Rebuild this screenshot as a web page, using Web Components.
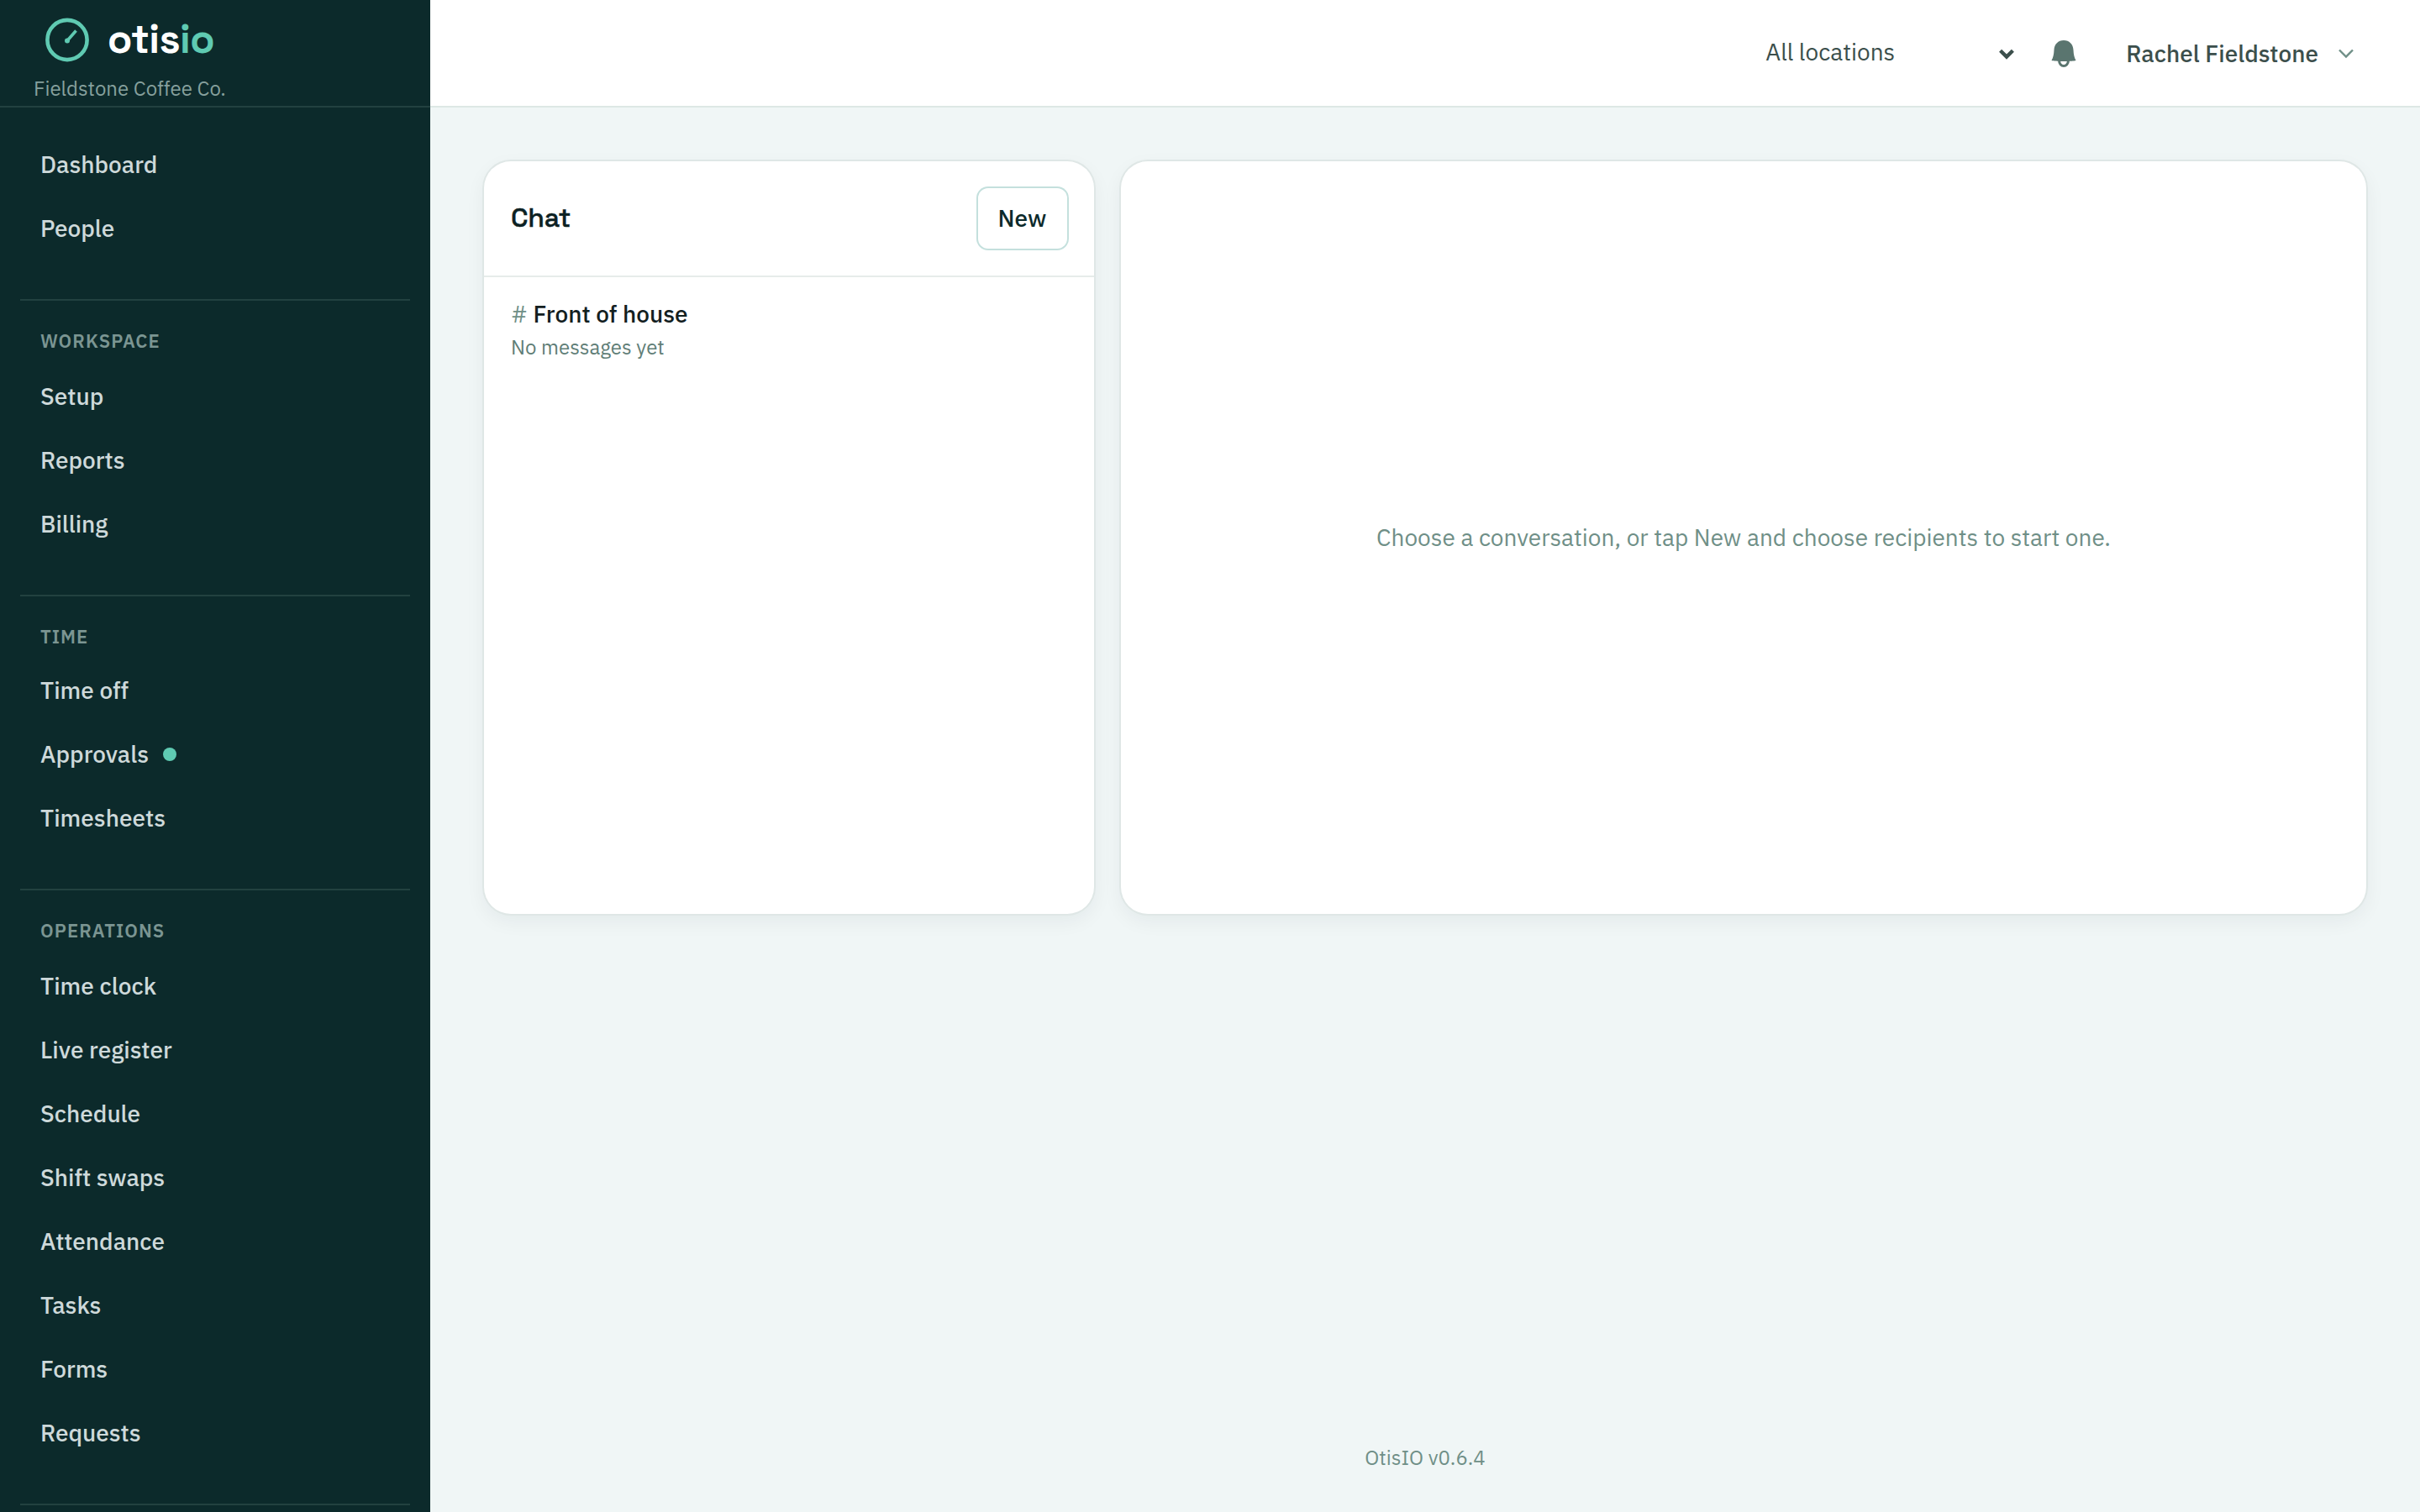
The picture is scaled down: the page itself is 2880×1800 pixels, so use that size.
<!DOCTYPE html>
<html lang="en">
<head>
<meta charset="utf-8">
<title>OtisIO</title>
<style>
  body {
    margin: 0;
    width: 2880px;
    height: 1800px;
    overflow: hidden;
    font: 400 28px/36px "IBM Plex Sans", Roboto, sans-serif;
    --ink: #0c2123;
    --muted: #6f8f87;
    --mint: #5fcab2;
    --line: #dde8e5;
  }
</style>
</head>
<body>
<otis-app>
  <otis-sidebar slot="sidebar" company="Fieldstone Coffee Co.">
    <nav-section>
      <nav-item>Dashboard</nav-item>
      <nav-item>People</nav-item>
    </nav-section>
    <nav-section label="Workspace">
      <nav-item>Setup</nav-item>
      <nav-item>Reports</nav-item>
      <nav-item>Billing</nav-item>
    </nav-section>
    <nav-section label="Time" style="--label-gap: 4px">
      <nav-item>Time off</nav-item>
      <nav-item dot>Approvals</nav-item>
      <nav-item>Timesheets</nav-item>
    </nav-section>
    <nav-section label="Operations">
      <nav-item>Time clock</nav-item>
      <nav-item>Live register</nav-item>
      <nav-item>Schedule</nav-item>
      <nav-item>Shift swaps</nav-item>
      <nav-item>Attendance</nav-item>
      <nav-item>Tasks</nav-item>
      <nav-item>Forms</nav-item>
      <nav-item>Requests</nav-item>
    </nav-section>
    <nav-section></nav-section>
  </otis-sidebar>
  <otis-topbar slot="topbar" location="All locations" user="Rachel Fieldstone"></otis-topbar>
  <otis-card>
    <chat-header slot="header" heading="Chat"><otis-button>New</otis-button></chat-header>
    <chat-row name="Front of house">No messages yet</chat-row>
  </otis-card>
  <otis-card>
    <empty-state>Choose a conversation, or tap New and choose recipients to start one.</empty-state>
  </otis-card>
  <span slot="footer">OtisIO v0.6.4</span>
</otis-app>

<script>
class BaseElement extends HTMLElement {
  constructor() {
    super();
    this.attachShadow({ mode: "open" });
    this.shadowRoot.innerHTML = this.render();
  }
  attr(name) {
    return this.getAttribute(name) || "";
  }
}

customElements.define("otis-app", class extends BaseElement {
  render() {
    return `
      <style>
        :host {
          display: grid;
          grid-template: 128px 1fr / 512px 1fr;
          width: 2880px;
          height: 1800px;
          background: #f0f6f6;
        }
        ::slotted([slot="sidebar"]) { grid-row: 1 / 3; }
        .content {
          display: flex;
          flex-direction: column;
          justify-content: space-between;
          padding: 64px 64px 47px;
        }
        main {
          display: grid;
          grid-template-columns: 726px 1fr;
          gap: 32px;
          height: 896px;
        }
        footer {
          font-size: 24px;
          line-height: 36px;
          text-align: center;
          color: var(--muted);
        }
      </style>
      <slot name="sidebar"></slot>
      <slot name="topbar"></slot>
      <div class="content">
        <main><slot></slot></main>
        <footer><slot name="footer"></slot></footer>
      </div>`;
  }
});

customElements.define("otis-sidebar", class extends BaseElement {
  render() {
    return `
      <style>
        :host {
          display: block;
          overflow: hidden;
          background: #0c2a2b;
        }
        header {
          box-sizing: border-box;
          height: 128px;
          padding: 16px 40px 0;
          border-bottom: 2px solid #224140;
        }
        .brand {
          display: flex;
          align-items: center;
          gap: 16px;
          height: 64px;
          padding-left: 8px;
          font: 600 48px/64px "Space Grotesk", Inter, sans-serif;
          letter-spacing: -0.6px;
          color: #fff;
        }
        .brand span { margin-top: -2px; }
        .brand em { font-style: normal; color: var(--mint); }
        p {
          margin: 7px 0 0;
          font-size: 24px;
          line-height: 36px;
          color: #86a09d;
        }
        nav { padding: 32px 24px 0; }
      </style>
      <header>
        <div class="brand">
          <svg width="64" height="64" viewBox="0 0 64 64" fill="none" stroke="#5fcab2">
            <circle cx="32" cy="31.5" r="23.6" stroke-width="4.6"/>
            <path d="M32 32.500 42.500 20.500" stroke-width="3.6"/>
            <circle cx="32" cy="32.500" r="3" fill="#5fcab2" stroke="none"/>
          </svg>
          <span>otis<em>io</em></span>
        </div>
        <p>${this.attr("company")}</p>
      </header>
      <nav><slot></slot></nav>`;
  }
});

customElements.define("nav-section", class extends BaseElement {
  render() {
    const label = this.attr("label");
    return `
      <style>
        :host {
          display: flex;
          flex-direction: column;
          gap: 4px;
          padding-bottom: 48px;
        }
        :host(:not(:first-child)) {
          border-top: 2px solid #224140;
          padding-top: 24px;
        }
        h2 {
          margin: 0 24px calc(var(--label-gap, 6px) - 4px);
          font-size: 22px;
          font-weight: 600;
          line-height: 48px;
          letter-spacing: 0.048em;
          text-transform: uppercase;
          color: #7b9592;
        }
      </style>
      ${label ? `<h2>${label}</h2>` : ""}
      <slot></slot>`;
  }
});

customElements.define("nav-item", class extends BaseElement {
  render() {
    return `
      <style>
        :host {
          display: flex;
          align-items: center;
          gap: 17px;
          height: 72px;
          padding: 0 24px;
          font-weight: 500;
          color: #ced9da;
        }
        i {
          width: 16px;
          height: 16px;
          border-radius: 50%;
          background: var(--mint);
        }
      </style>
      <span><slot></slot></span>
      ${this.hasAttribute("dot") ? "<i></i>" : ""}`;
  }
});

customElements.define("otis-topbar", class extends BaseElement {
  render() {
    return `
      <style>
        :host {
          display: flex;
          align-items: center;
          justify-content: flex-end;
          padding-right: 79px;
          border-bottom: 2px solid var(--line);
          background: #fff;
          color: #3c4f4c;
        }
        .select {
          display: flex;
          align-items: center;
          justify-content: space-between;
          width: 296px;
          padding-bottom: 2px;
          margin-right: 44px;
        }
        .select svg { margin-top: 4px; }
        .bell { margin: 2px 59px 0 0; }
        .user {
          display: flex;
          align-items: center;
          gap: 24px;
          padding-top: 2px;
          font-weight: 500;
        }
        svg { display: block; }
      </style>
      <div class="select">
        <span>${this.attr("location")}</span>
        <svg width="18" height="13" viewBox="0 0 18 13" fill="none" stroke="#3c4f4c" stroke-width="4.4">
          <path d="M1.600 2.200 9 9.600 16.400 2.200"/>
        </svg>
      </div>
      <svg class="bell" width="30" height="34" viewBox="0 0 30 34">
        <path d="M15 1C8.400 1 3.800 5.600 3.500 12.500 3.200 18 2.600 21 .5 25c3 .7 6 1 14.500 1s11.500-.3 14.500-1c-2.100-4-2.700-7-3-12.500C26.200 5.600 21.600 1 15 1z" fill="#5a756f"/>
        <path d="M9.600 25.500a5.400 6 0 0 0 10.800 0" fill="none" stroke="#5a756f" stroke-width="3"/>
      </svg>
      <div class="user">
        <span>${this.attr("user")}</span>
        <svg width="18" height="12" viewBox="0 0 18 12" fill="none" stroke="#6f8f87" stroke-width="2.400">
          <path d="M1 1.500 9 9.500 17 1.500"/>
        </svg>
      </div>`;
  }
});

customElements.define("otis-card", class extends BaseElement {
  render() {
    return `
      <style>
        :host {
          display: flex;
          flex-direction: column;
          border-radius: 32px;
          background: #fff;
          box-shadow: 0 0 0 2px #dfe7e6, 0 8px 24px rgba(12, 42, 43, 0.06);
        }
      </style>
      <slot name="header"></slot>
      <slot></slot>`;
  }
});

customElements.define("chat-header", class extends BaseElement {
  render() {
    return `
      <style>
        :host {
          display: flex;
          align-items: center;
          justify-content: space-between;
          height: 136px;
          padding: 0 32px;
          border-bottom: 2px solid #e6ecea;
        }
        h1 {
          margin: 0;
          padding-bottom: 2px;
          font: 500 32px/40px "Space Grotesk", Inter, sans-serif;
          letter-spacing: -0.3px;
          -webkit-text-stroke: 0.4px;
          color: var(--ink);
        }
      </style>
      <h1>${this.attr("heading")}</h1>
      <slot></slot>`;
  }
});

customElements.define("otis-button", class extends BaseElement {
  render() {
    return `
      <style>
        button {
          display: block;
          width: 106px;
          height: 72px;
          padding: 0 1px 0 0;
          border: 0;
          border-radius: 12px;
          background: #fff;
          box-shadow: 0 0 0 2px #c4e0dd;
          font: inherit;
          font-weight: 500;
          color: #0c2a2b;
        }
      </style>
      <button><slot></slot></button>`;
  }
});

customElements.define("chat-row", class extends BaseElement {
  render() {
    return `
      <style>
        :host {
          display: block;
          padding: 24px 32px;
        }
        h3 {
          margin: 0;
          font-size: 28px;
          font-weight: 500;
          line-height: 40px;
          color: #13201f;
        }
        h3 span { font-weight: 400; color: var(--muted); }
        p {
          margin: 3px 0 0;
          font-size: 24px;
          line-height: 32px;
          color: #5f7e77;
        }
      </style>
      <h3><span>#</span> ${this.attr("name")}</h3>
      <p><slot></slot></p>`;
  }
});

customElements.define("empty-state", class extends BaseElement {
  render() {
    return `
      <style>
        :host {
          display: grid;
          flex: 1;
          place-items: center;
          color: var(--muted);
        }
      </style>
      <p><slot></slot></p>`;
  }
});
</script>
</body>
</html>
